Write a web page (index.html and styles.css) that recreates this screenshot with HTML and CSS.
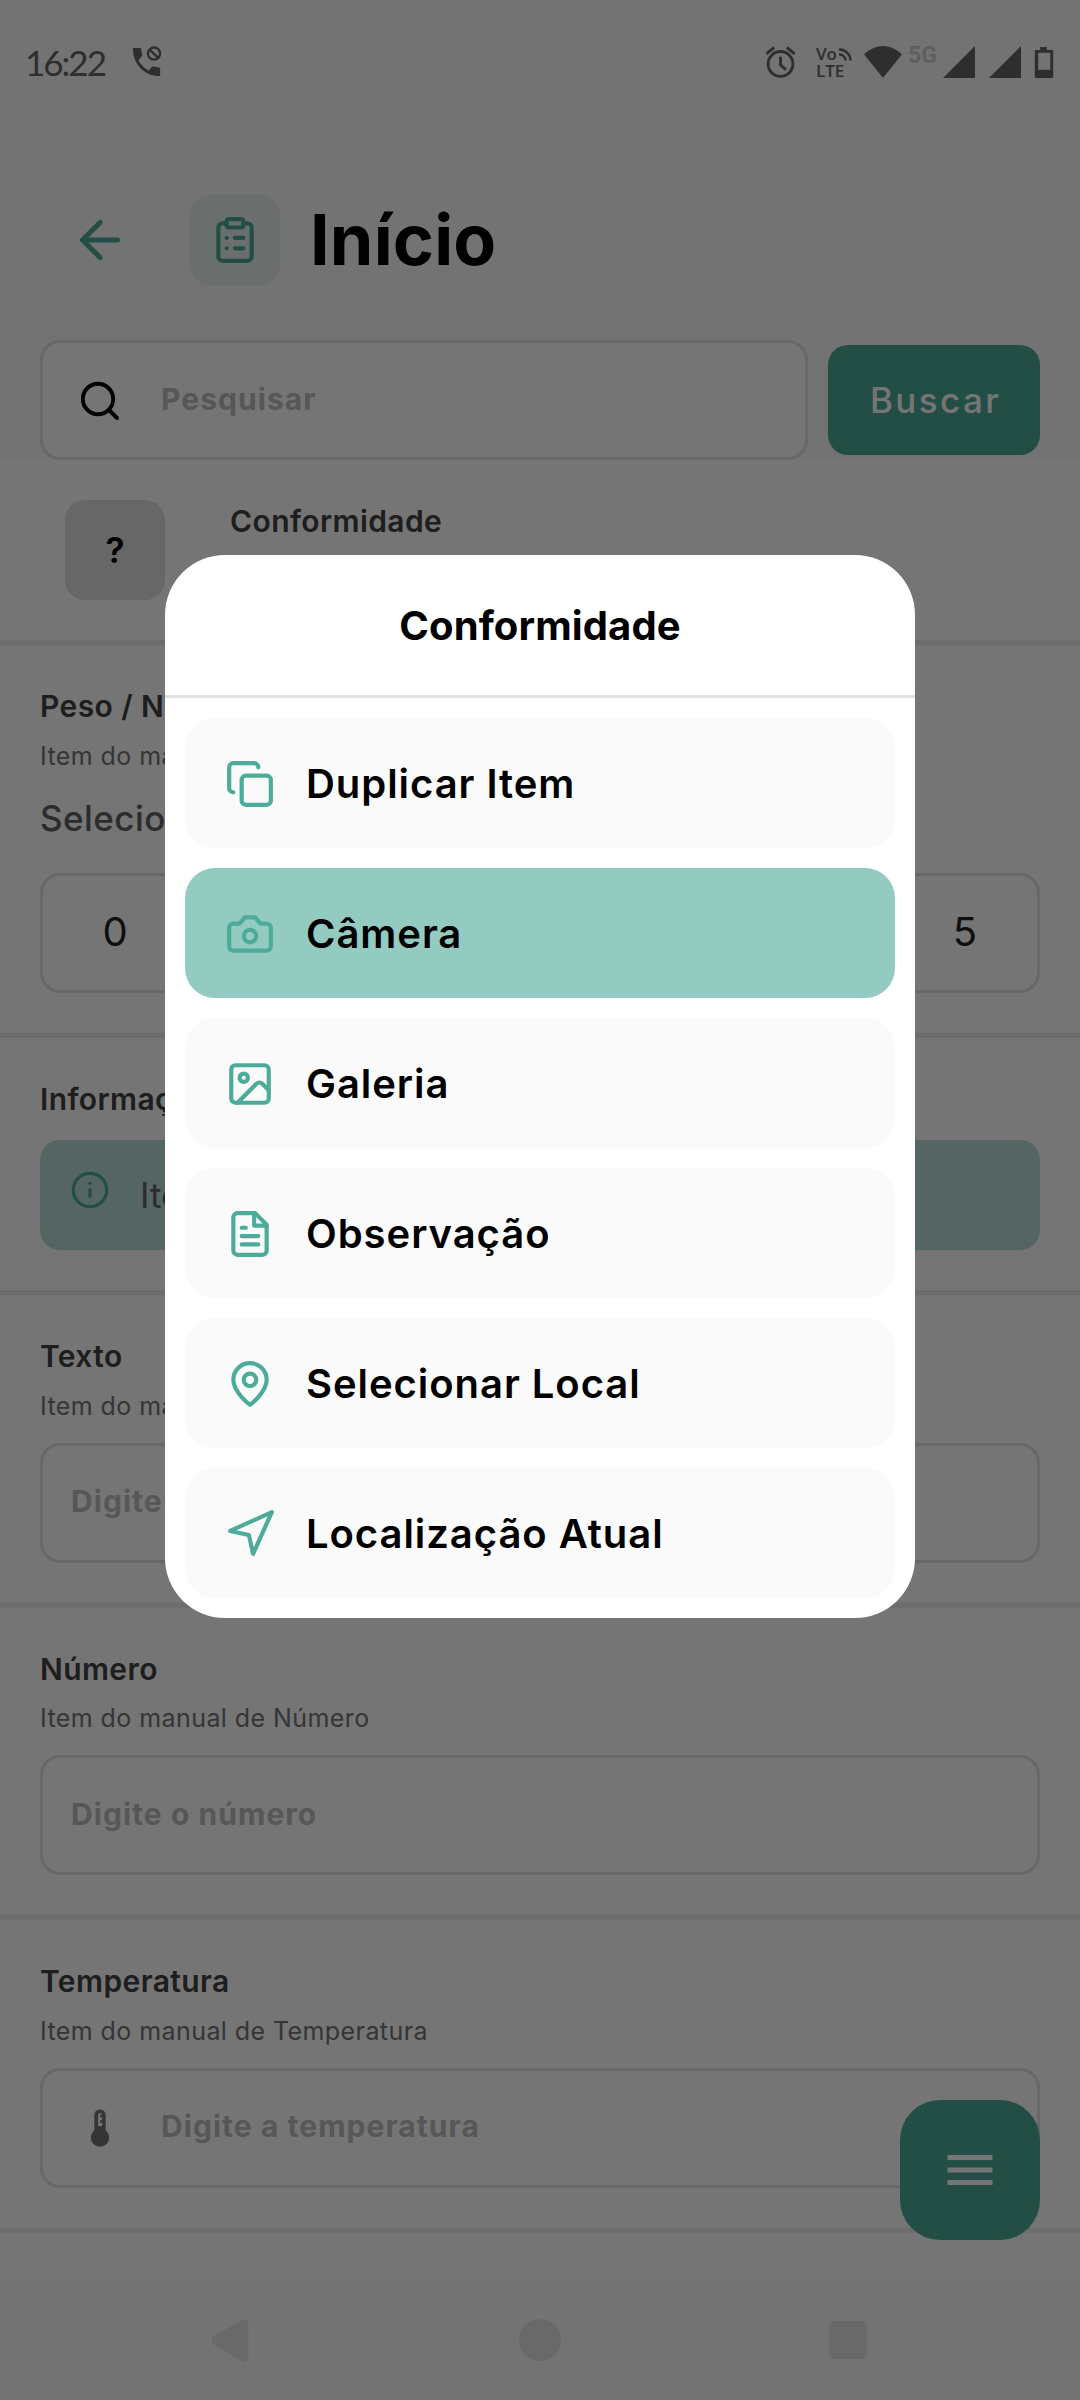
FILE: index.html
```html
<!DOCTYPE html>
<html lang="pt-BR">
<head>
<meta charset="utf-8">
<title>Início</title>
<link rel="stylesheet" href="styles.css">
</head>
<body>
<div class="screen">
  <header class="top">
    <div class="status">
      <span class="time">16:22</span>
      <svg class="st-call" width="30" height="32" viewBox="0 0 32 34"><path d="M1 2h8.500l1.500 8-4 5c2.500 5 6 8.500 10.500 11l4.500-4.500 8 1.500v9C14 32.500 1 20 1 2z" fill="currentColor"/><circle cx="23.500" cy="8" r="6.500" fill="none" stroke="currentColor" stroke-width="2.500"/><path d="M19 4l9 8.500" stroke="currentColor" stroke-width="2.500"/></svg>
      <span class="fill"></span>
      <svg class="st-alarm" width="31" height="32" viewBox="0 0 31 33"><g fill="none" stroke="currentColor" stroke-width="3"><circle cx="15.500" cy="18.500" r="12.800"/><path d="M1 8l8-6.500M30 8l-8-6.500"/><path d="M15.500 11v8.500l5.500 5"/></g></svg>
      <div class="volte"><div class="vo">Vo<svg width="13" height="13" viewBox="0 0 13 13"><path d="M0 1.500A11 11 0 0 1 11.500 12.500M0 6.500A6 6 0 0 1 6.500 12.500" fill="none" stroke="currentColor" stroke-width="2.400"/></svg></div><div>LTE</div></div>
      <svg class="st-wifi" width="38" height="32" viewBox="0 0 38 33" preserveAspectRatio="none"><path d="M0 8.500Q19-8.500 38 8.500L19 33z" fill="currentColor"/></svg>
      <span class="five">5G</span>
      <svg class="st-sig" width="32" height="32" viewBox="0 0 32 32"><path d="M32 0v32H0z" fill="currentColor"/></svg>
      <svg class="st-sig2" width="32" height="32" viewBox="0 0 32 32"><path d="M32 0v32H0z" fill="currentColor"/></svg>
      <svg class="st-bat" width="20" height="32" viewBox="0 0 20 33"><path fill-rule="evenodd" d="M6 1h7v3h5.500q1 0 1 1v27q0 1-1 1h-17q-1 0-1-1V5q0-1 1-1H6zM4 7v17.500h12.500V7z" fill="currentColor"/></svg>
    </div>
    <div class="bar">
      <svg class="ic back" width="60" height="60" viewBox="0 0 24 24"><path d="M19 12H5M12 19l-7-7 7-7"/></svg>
      <div class="tile"><svg class="ic" width="50" height="50" viewBox="0 0 24 24"><rect x="8" y="2" width="8" height="4" rx="1"/><path d="M16 4h2a2 2 0 0 1 2 2v14a2 2 0 0 1-2 2H6a2 2 0 0 1-2-2V6a2 2 0 0 1 2-2h2M12 11h4M12 16h4M8 11h.01M8 16h.01"/></svg></div>
      <h1>Início</h1>
    </div>
    <div class="search">
      <div class="input with-icon">
        <svg width="60" height="60" viewBox="0 0 60 60"><g fill="none" stroke="#000" stroke-width="3.900" stroke-linecap="round"><circle cx="28" cy="29" r="15.200"/><path d="M39 40l8 8"/></g></svg>
        <span>Pesquisar</span>
      </div>
      <div class="btn">Buscar</div>
    </div>
  </header>

  <main>
    <section class="first"><div class="qmark">?</div><div class="title">Conformidade</div></section>
    <section>
      <div class="title">Peso / Nota</div>
      <div class="sub">Item do manual</div>
      <div class="hint">Selecione</div>
      <div class="scores"><div>0</div><div>1</div><div>2</div><div>3</div><div>4</div><div>5</div></div>
    </section>
    <section>
      <div class="title">Informação</div>
      <div class="info"><svg class="ic" width="40" height="40" viewBox="0 0 40 40"><circle cx="20" cy="20" r="16.700"/><path d="M20 19.500v7"/><path d="M20 13.200v.1"/></svg><span>Item</span></div>
    </section>
    <section>
      <div class="title">Texto</div>
      <div class="sub">Item do manual de Texto</div>
      <div class="input"><span>Digite o texto</span></div>
    </section>
    <section>
      <div class="title">Número</div>
      <div class="sub">Item do manual de Número</div>
      <div class="input"><span>Digite o número</span></div>
    </section>
    <section>
      <div class="title">Temperatura</div>
      <div class="sub">Item do manual de Temperatura</div>
      <div class="input with-icon">
        <svg width="60" height="60" viewBox="0 0 60 60"><g fill="#757575"><circle cx="30" cy="39.500" r="9.200"/><rect x="24.300" y="11.500" width="11.400" height="26" rx="5.700"/></g><path d="M28.200 28V17q0-2 2-2t2 1.500h-2v3h2v2.500h-2v3h2v3z" fill="#fff"/></svg>
        <span>Digite a temperatura</span>
      </div>
    </section>
  </main>

  <nav class="nav">
    <svg width="38" height="43" viewBox="0 0 38 43"><path d="M33 5v33L5 21.500z" fill="currentColor" stroke="currentColor" stroke-width="9" stroke-linejoin="round"/></svg>
    <i class="dot"></i>
    <i class="sq"></i>
  </nav>

  <div class="fab"><svg width="60" height="60" viewBox="0 0 24 24"><path d="M3 6h18v2H3zM3 11h18v2H3zM3 16h18v2H3z" fill="#fff"/></svg></div>

  <div class="scrim">
    <div class="modal">
      <h2>Conformidade</h2>
      <div class="list">
        <div class="item"><svg class="ic" width="50" height="50" viewBox="0 0 24 24"><rect x="8" y="8" width="14" height="14" rx="2"/><path d="M4 16c-1.100 0-2-.9-2-2V4c0-1.100.9-2 2-2h10c1.100 0 2 .9 2 2"/></svg><span>Duplicar Item</span></div>
        <div class="item active"><svg class="ic" width="50" height="50" viewBox="0 0 24 24"><path d="M14.500 4h-5L7 7H4a2 2 0 0 0-2 2v9a2 2 0 0 0 2 2h16a2 2 0 0 0 2-2V9a2 2 0 0 0-2-2h-3z"/><circle cx="12" cy="13" r="3"/></svg><span>Câmera</span></div>
        <div class="item"><svg class="ic" width="50" height="50" viewBox="0 0 24 24"><rect x="3" y="3" width="18" height="18" rx="2"/><circle cx="9" cy="9" r="2"/><path d="M21 15l-3.086-3.086a2 2 0 0 0-2.828 0L6 21"/></svg><span>Galeria</span></div>
        <div class="item"><svg class="ic" width="50" height="50" viewBox="0 0 24 24"><path d="M14.500 2H6a2 2 0 0 0-2 2v16a2 2 0 0 0 2 2h12a2 2 0 0 0 2-2V7.500z"/><path d="M14 2v6h6M16 13H8M16 17H8M10 9H8"/></svg><span>Observação</span></div>
        <div class="item"><svg class="ic" width="50" height="50" viewBox="0 0 24 24"><path d="M20 10c0 6-8 12-8 12s-8-6-8-12a8 8 0 0 1 16 0z"/><circle cx="12" cy="10" r="3"/></svg><span>Selecionar Local</span></div>
        <div class="item"><svg class="ic arrow" width="50" height="50" viewBox="0 0 24 24"><path d="M22 2l-9 20-2-9-9-2z"/></svg><span>Localização Atual</span></div>
      </div>
    </div>
  </div>
</div>
</body>
</html>
```
FILE: styles.css
```css
* { box-sizing: border-box; margin: 0; }
body { font-family: Inter, "Liberation Sans", sans-serif; background: #fff; }
svg { display: block; flex: none; }
.screen { position: relative; width: 1080px; height: 2400px; overflow: hidden; display: flex; flex-direction: column; background: #fff; }
.ic { fill: none; stroke: #4dab9a; stroke-width: 2; stroke-linecap: round; stroke-linejoin: round; }

.top { height: 460px; background: #fafafa; }
.status { height: 120px; padding: 46px 26px 0 25px; display: flex; align-items: flex-start; color: #646464; }
.time { width: 82px; margin-top: -2px; font: 400 35px/36px Lato, sans-serif; letter-spacing: -2px; white-space: nowrap; }
.st-call { margin-left: 25px; }
.fill { flex: 1; }
.st-alarm { margin-right: 20px; }
.volte { width: 35px; margin: -1px 13px 0 0; font: 600 17px/17px "Open Sans", sans-serif; }
.vo { display: flex; gap: 2px; }
.vo svg { margin-top: 3px; }
.st-wifi { margin-right: 6px; }
.five { width: 30px; margin: -2px 5px 0 0; font: 700 23px/24px Roboto, sans-serif; color: #d0d0d0; }
.st-sig { margin-right: 14px; }
.st-sig2 { margin-right: 13px; }

.bar { height: 220px; padding: 20px 0 0 70px; display: flex; align-items: center; }
.tile { width: 90px; height: 90px; margin: 0 30px 0 60px; border-radius: 20px; background: rgba(77,171,154,.1); display: grid; place-items: center; }
h1 { font-size: 70px; line-height: 84px; font-weight: 700; letter-spacing: .2px; }
.search { height: 120px; padding: 0 40px; display: flex; align-items: center; gap: 20px; }
.search .input { flex: 1; }
.input { height: 120px; border: 3px solid #e2e2e2; border-radius: 20px; background: #fff; padding-left: 28px; display: flex; align-items: center; color: #bdbdbd; font-size: 30px; font-weight: 700; letter-spacing: 1.05px; }
.input span { margin-bottom: 3px; }
.input.with-icon { padding-left: 27px; gap: 31px; }
.btn { width: 212px; height: 110px; padding-left: 3px; border-radius: 20px; background: #4dab9a; color: #fff; display: grid; place-items: center; font-size: 35px; font-weight: 550; letter-spacing: 2.4px; }

main { height: 1820px; }
section { border-bottom: 5px solid #eee; padding: 40px 40px; }
.first { height: 185px; padding: 40px 65px; display: flex; gap: 65px; }
.qmark { width: 100px; height: 100px; border-radius: 20px; background: #e0e0e0; display: grid; place-items: center; font-size: 35px; font-weight: 600; }
.title { height: 42.5px; line-height: 43.5px; font-size: 30px; font-weight: 600; color: #424242; letter-spacing: .4px; }
.sub { height: 57px; margin-bottom: 8px; line-height: 57.5px; font-size: 25px; color: #757575; letter-spacing: .42px; }
.hint { height: 67px; margin: -8px 0 21px; line-height: 66px; font-size: 35px; font-weight: 450; letter-spacing: .45px; color: #616161; }
.scores { display: grid; grid-template-columns: repeat(6, 1fr); gap: 20px; }
.scores div { height: 120px; padding-bottom: 2px; border: 3px solid #e2e2e2; border-radius: 20px; display: grid; place-items: center; font-size: 40px; color: #212121; }
.info { margin-top: 20px; height: 110px; padding: 30px; border-radius: 20px; background: rgba(77,171,154,.4); display: flex; gap: 30px; font-size: 35px; color: #616161; }
.info .ic { stroke-width: 3.2; }
.info span { line-height: 51px; }

.nav { height: 120px; background: #fafafa; color: #e4e4e4; display: flex; align-items: center; padding: 0 213px 0 211px; justify-content: space-between; }
.dot { width: 42px; height: 42px; margin-left: 2px; border-radius: 50%; background: currentColor; }
.sq { width: 38px; height: 38px; border-radius: 5px; background: currentColor; }
.fab { position: absolute; right: 40px; bottom: 160px; width: 140px; height: 140px; border-radius: 40px; background: #4dab9a; display: grid; place-items: center; }

.scrim { position: absolute; inset: 0; padding-top: 555px; background: rgba(0,0,0,.54); }
.modal { width: 750px; height: 1062.5px; margin: 0 auto; border-radius: 60px; background: #fff; overflow: hidden; }
h2 { height: 142.5px; border-bottom: 3px solid #e2e2e2; text-align: center; font-size: 40px; line-height: 142px; font-weight: 700; letter-spacing: .12px; }
.list { padding: 20px; display: grid; gap: 20px; }
.item { height: 130px; padding: 3px 0 0 40px; border-radius: 30px; background: #fafafa; display: flex; align-items: center; gap: 31px; font-size: 40px; font-weight: 600; letter-spacing: .95px; }
.item span { margin-bottom: 1px; }
.item.active { background: #94cbc1; }
.arrow { position: relative; left: 1px; top: -1px; }
```
